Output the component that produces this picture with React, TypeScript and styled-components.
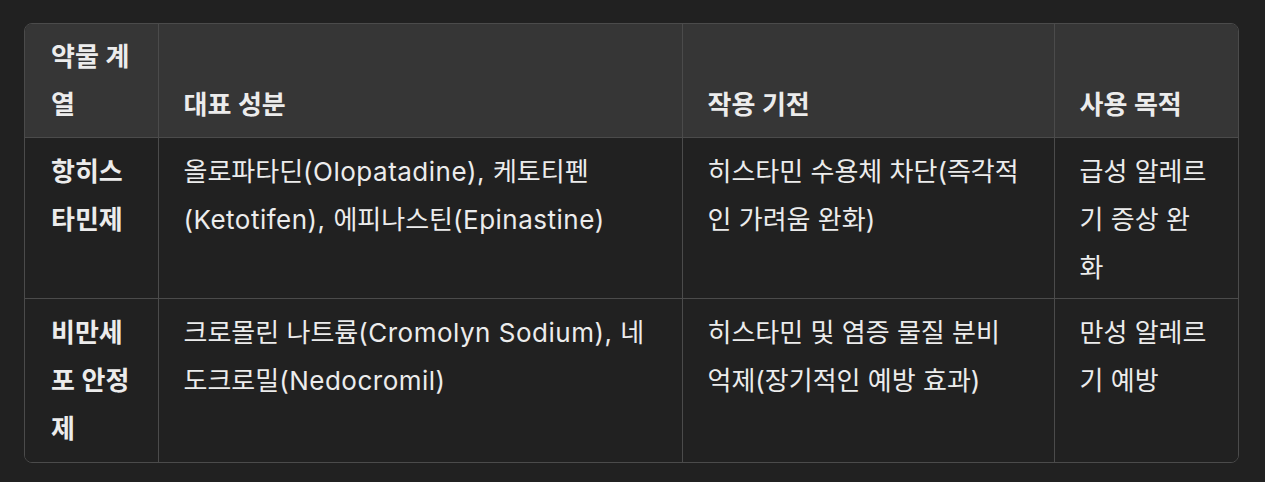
import React from "react";
import styled, { createGlobalStyle } from "styled-components";

const Global = createGlobalStyle`
  html, body { margin: 0; padding: 0; background: #212121; }
  body {
    font-family: Inter, "Noto Sans CJK KR", "Noto Sans", sans-serif;
    color: #ececec;
  }
`;

const Page = styled.div`
  padding: 23px 26px 20px 24px;
`;

const Frame = styled.div`
  border: 1px solid #4b4b4b;
  border-radius: 8px;
  overflow: hidden;
  width: 1213px;
`;

const Table = styled.table`
  width: 100%;
  border-collapse: collapse;
  table-layout: fixed;
  font-size: 26px;
  line-height: 48px;
`;

const HeadRow = styled.tr`
  background: #363636;
`;

const Row = styled.tr`
  background: #212121;
  border-top: 1px solid #4b4b4b;
  &:last-child td { padding-bottom: 9px; }
`;

const Th = styled.th`
  text-align: left;
  vertical-align: bottom;
  font-weight: 600;
  padding: 9px 8px 8px 25px;
  border-left: 1px solid #4b4b4b;
  white-space: nowrap;
  &:first-child { border-left: none; padding-left: 26px; }
`;

const Td = styled.td<{ $strong?: boolean }>`
  vertical-align: top;
  font-weight: ${(p) => (p.$strong ? 600 : 400)};
  padding: 10px 8px 6px 25px;
  border-left: 1px solid #4b4b4b;
  white-space: nowrap;
  &:first-child { border-left: none; padding-left: 26px; }
`;

const Latin = styled.span`
  letter-spacing: 0.5px;
`;

type Seg = string | { l: string };

const rows: { cls: Seg[][]; comp: Seg[][]; mech: Seg[][]; use: Seg[][] }[] = [
  {
    cls: [["항히스"], ["타민제"]],
    comp: [
      ["올로파타딘", { l: "(Olopatadine), " }, "케토티펜"],
      [{ l: "(Ketotifen), " }, "에피나스틴", { l: "(Epinastine)" }],
    ],
    mech: [["히스타민 수용체 차단(즉각적"], ["인 가려움 완화)"]],
    use: [["급성 알레르"], ["기 증상 완"], ["화"]],
  },
  {
    cls: [["비만세"], ["포 안정"], ["제"]],
    comp: [
      ["크로몰린 나트륨", { l: "(Cromolyn Sodium), " }, "네"],
      ["도크로밀", { l: "(Nedocromil)" }],
    ],
    mech: [["히스타민 및 염증 물질 분비"], ["억제(장기적인 예방 효과)"]],
    use: [["만성 알레르"], ["기 예방"]],
  },
];

const Lines = ({ items }: { items: Seg[][] }) => (
  <>
    {items.map((line, i) => (
      <React.Fragment key={i}>
        {i > 0 && <br />}
        {line.map((s, j) =>
          typeof s === "string" ? (
            <React.Fragment key={j}>{s}</React.Fragment>
          ) : (
            <Latin key={j}>{s.l}</Latin>
          )
        )}
      </React.Fragment>
    ))}
  </>
);

export default function App() {
  return (
    <Page>
      <Global />
      <Frame>
        <Table>
          <colgroup>
            <col style={{ width: 133 }} />
            <col style={{ width: 524 }} />
            <col style={{ width: 372 }} />
            <col />
          </colgroup>
          <thead>
            <HeadRow>
              <Th>
                <Lines items={[["약물 계"], ["열"]]} />
              </Th>
              <Th>대표 성분</Th>
              <Th>작용 기전</Th>
              <Th>사용 목적</Th>
            </HeadRow>
          </thead>
          <tbody>
            {rows.map((r, i) => (
              <Row key={i}>
                <Td $strong>
                  <Lines items={r.cls} />
                </Td>
                <Td>
                  <Lines items={r.comp} />
                </Td>
                <Td>
                  <Lines items={r.mech} />
                </Td>
                <Td>
                  <Lines items={r.use} />
                </Td>
              </Row>
            ))}
          </tbody>
        </Table>
      </Frame>
    </Page>
  );
}
